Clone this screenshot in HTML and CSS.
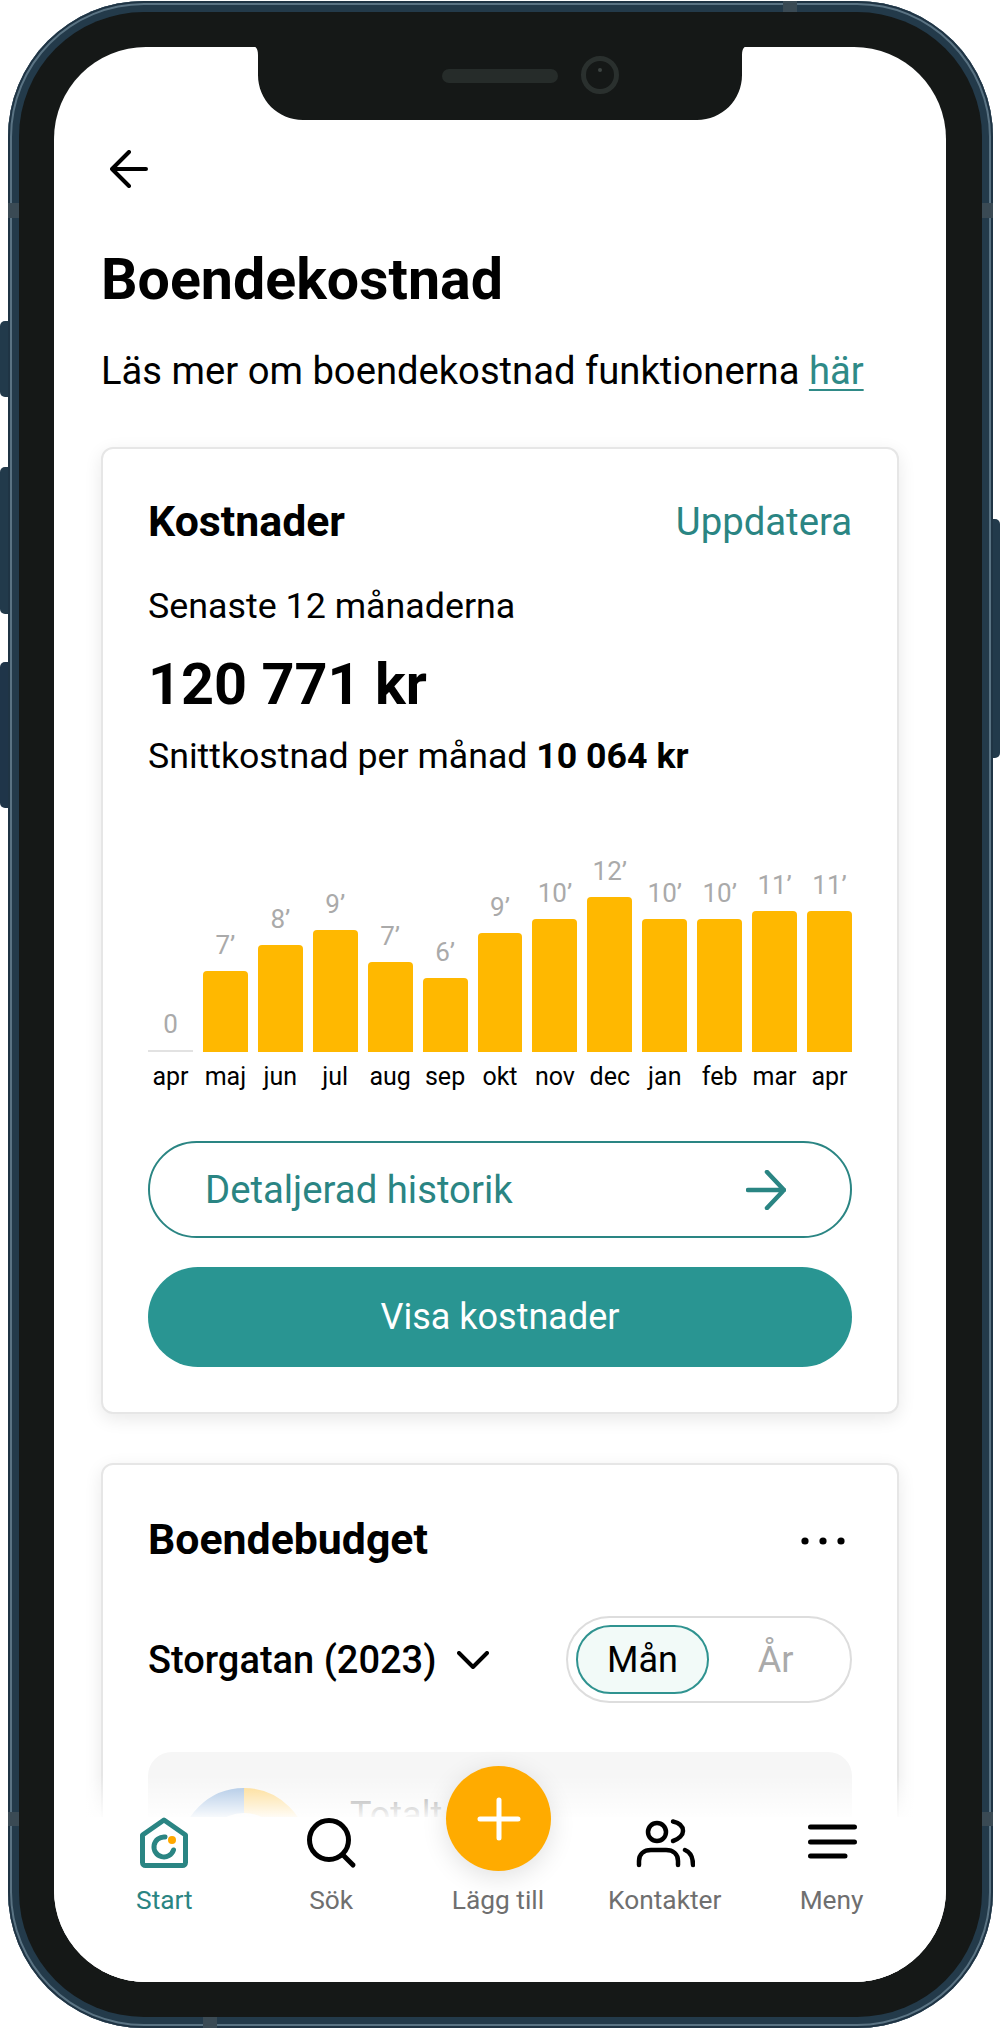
FILE: index.html
```html
<!DOCTYPE html>
<html lang="sv">
<head>
<meta charset="utf-8">
<title>Boendekostnad</title>
<link rel="stylesheet" href="styles.css">
</head>
<body>
<div class="device">
  <span class="side-btn btn-a"></span>
  <span class="side-btn btn-b"></span>
  <span class="side-btn btn-c"></span>
  <span class="side-btn btn-r"></span>
  <div class="frame">
    <span class="band band-lt"></span>
    <span class="band band-rt"></span>
    <span class="band band-lb"></span>
    <span class="band band-rb"></span>
    <span class="band band-t"></span>
    <span class="band band-b"></span>
    <div class="bezel">
      <div class="screen">
        <main class="content">
          <svg class="back" viewBox="0 0 38 38" fill="none" stroke="#000" stroke-width="4" stroke-linecap="round" stroke-linejoin="round"><path d="M36 19H2M19 2L2 19l17 17"/></svg>
          <h1 class="title">Boendekostnad</h1>
          <p class="intro">Läs mer om boendekostnad funktionerna <a class="link" href="#">här</a></p>

          <section class="card card-costs">
            <div class="card-head">
              <h2 class="card-title">Kostnader</h2>
              <span class="update">Uppdatera</span>
            </div>
            <p class="period">Senaste 12 månaderna</p>
            <p class="total">120 771 kr</p>
            <p class="average">Snittkostnad per månad <b>10 064 kr</b></p>

            <div class="chart">
              <div class="col"><span class="val">0</span><span class="bar bar-zero"></span></div>
              <div class="col"><span class="val">7’</span><span class="bar" style="height:81px"></span></div>
              <div class="col"><span class="val">8’</span><span class="bar" style="height:107px"></span></div>
              <div class="col"><span class="val">9’</span><span class="bar" style="height:122px"></span></div>
              <div class="col"><span class="val">7’</span><span class="bar" style="height:90px"></span></div>
              <div class="col"><span class="val">6’</span><span class="bar" style="height:74px"></span></div>
              <div class="col"><span class="val">9’</span><span class="bar" style="height:119px"></span></div>
              <div class="col"><span class="val">10’</span><span class="bar" style="height:133px"></span></div>
              <div class="col"><span class="val">12’</span><span class="bar" style="height:155px"></span></div>
              <div class="col"><span class="val">10’</span><span class="bar" style="height:133px"></span></div>
              <div class="col"><span class="val">10’</span><span class="bar" style="height:133px"></span></div>
              <div class="col"><span class="val">11’</span><span class="bar" style="height:141px"></span></div>
              <div class="col"><span class="val">11’</span><span class="bar" style="height:141px"></span></div>
            </div>
            <div class="months">
              <span>apr</span><span>maj</span><span>jun</span><span>jul</span><span>aug</span><span>sep</span><span>okt</span><span>nov</span><span>dec</span><span>jan</span><span>feb</span><span>mar</span><span>apr</span>
            </div>

            <a class="btn-outline" href="#">
              <span>Detaljerad historik</span>
              <svg class="btn-arrow" viewBox="0 0 40 40" fill="none" stroke="#2a8583" stroke-width="4.5" stroke-linecap="round" stroke-linejoin="round"><path d="M2 20h36M21 2l17 18-17 18"/></svg>
            </a>
            <a class="btn-solid" href="#">Visa kostnader</a>
          </section>

          <section class="card card-budget">
            <div class="card-head">
              <h2 class="card-title">Boendebudget</h2>
              <svg class="dots" viewBox="0 0 44 8" fill="#000"><circle cx="4" cy="4" r="3.6"/><circle cx="22" cy="4" r="3.6"/><circle cx="40" cy="4" r="3.6"/></svg>
            </div>
            <div class="budget-row">
              <div class="picker">
                <span>Storgatan (2023)</span>
                <svg class="chevron" viewBox="0 0 32 18" fill="none" stroke="#000" stroke-width="4" stroke-linecap="round" stroke-linejoin="round"><path d="M2 2l14 14L30 2"/></svg>
              </div>
              <div class="toggle">
                <span class="toggle-on">Mån</span>
                <span class="toggle-off">År</span>
              </div>
            </div>
            <div class="summary">
              <svg class="donut" viewBox="0 0 128 128" fill="none" stroke-width="25"><path d="M64 12.5A51.5 51.5 0 0 0 12.5 64" stroke="#9dbce0"/><path d="M64 12.5A51.5 51.5 0 0 1 115.5 64" stroke="#fdd680"/></svg>
              <span class="summary-label">Totalt</span>
            </div>
          </section>
        </main>

        <nav class="nav">
          <a class="nav-item nav-active" href="#">
            <svg class="nav-icon" viewBox="0 0 60 60" fill="none" stroke="#2a8583" stroke-width="5" stroke-linecap="round" stroke-linejoin="round"><path d="M30 3L8.5 18v27.5a3 3 0 0 0 3 3h37a3 3 0 0 0 3-3V18z"/><path d="M31 20A10 10 0 1 0 39.5 33"/><circle cx="38" cy="23" r="4" fill="#ffa800" stroke="none"/></svg>
            <span>Start</span>
          </a>
          <a class="nav-item" href="#">
            <svg class="nav-icon" viewBox="0 0 60 60" fill="none" stroke="#000" stroke-width="5" stroke-linecap="round"><circle cx="28" cy="23" r="19.5"/><path d="M42 38l10 10"/></svg>
            <span>Sök</span>
          </a>
          <a class="nav-item" href="#">
            <span class="nav-icon"></span>
            <span>Lägg till</span>
          </a>
          <a class="nav-item" href="#">
            <svg class="nav-icon" viewBox="0 0 60 60" fill="none" stroke="#000" stroke-width="4.5" stroke-linecap="round"><circle cx="22" cy="15" r="9"/><path d="M38 4.5C45 6 48 10 48 14c0 4-4 8-10 10"/><path d="M4 48v-4c0-7 5-11 12-11h15c7 0 12 4 12 11v4"/><path d="M50 33c5 2 8 6 8 15"/></svg>
            <span>Kontakter</span>
          </a>
          <a class="nav-item" href="#">
            <svg class="nav-icon" viewBox="0 0 60 60" fill="none" stroke="#000" stroke-width="5" stroke-linecap="round"><path d="M8.5 10h44M8.5 25h44M8.5 39H43"/></svg>
            <span>Meny</span>
          </a>
          <button class="fab" type="button" aria-label="Lägg till">
            <svg viewBox="0 0 44 44" fill="none" stroke="#fff" stroke-width="5" stroke-linecap="round"><path d="M22 3v38M3 22h38"/></svg>
          </button>
        </nav>

        <svg class="notch" viewBox="0 0 496 74">
          <path fill="#151817" d="M0 0C4 0 6 3 6 9V29C6 54 26 74 51 74H445C470 74 490 54 490 29V9C490 3 492 0 496 0Z"/>
          <rect x="190" y="23" width="116" height="14" rx="7" fill="#262c2a"/>
          <circle cx="348" cy="29" r="16.5" fill="none" stroke="#2a302e" stroke-width="5"/>
          <circle cx="348" cy="24" r="2" fill="#3d4442"/>
        </svg>
      </div>
    </div>
  </div>
</div>
</body>
</html>
```

FILE: styles.css
```css
* { box-sizing: border-box; }

html, body { margin: 0; padding: 0; background: #fff; }

body {
  width: 1000px;
  height: 2029px;
  overflow: hidden;
  font-family: Roboto, "Liberation Sans", sans-serif;
  color: #000;
}

.device {
  position: relative;
  width: 1000px;
  height: 2029px;
  padding: 1px 7px 1px 8px;
}

.side-btn {
  position: absolute;
  width: 9px;
  background: #223a4b;
}
.btn-a { left: 0; top: 321px; height: 76px; border-radius: 5px 0 0 5px; }
.btn-b { left: 0; top: 467px; height: 147px; border-radius: 5px 0 0 5px; }
.btn-c { left: 0; top: 662px; height: 146px; border-radius: 5px 0 0 5px; background: #1f3549; }
.btn-r { right: 0; top: 519px; height: 239px; border-radius: 0 5px 5px 0; }

.frame {
  position: relative;
  height: 100%;
  padding: 11px;
  border-radius: 136px;
  background: #233a4a;
  box-shadow: inset 0 0 0 2px #1f3444, inset 0 0 0 4px #5a7383;
}

.band { position: absolute; background: #3a4a54; }
.band-lt { left: 0; top: 202px; width: 11px; height: 15px; }
.band-rt { right: 0; top: 202px; width: 11px; height: 15px; }
.band-lb { left: 0; top: 1811px; width: 11px; height: 14px; }
.band-rb { right: 0; top: 1811px; width: 11px; height: 14px; }
.band-t { left: 775px; top: 0; width: 14px; height: 11px; }
.band-b { left: 195px; bottom: 0; width: 14px; height: 11px; }

.bezel {
  height: 100%;
  padding: 35px 36px 35px 35px;
  border-radius: 125px;
  background: #151817;
}

.screen {
  position: relative;
  height: 100%;
  overflow: hidden;
  border-radius: 92px;
  background: #fff;
}

.notch {
  position: absolute;
  left: 198px;
  top: -1px;
  width: 496px;
  height: 74px;
}

.content { padding: 103px 47px 0; }

.back { display: block; width: 38px; height: 38px; margin-left: 9px; }

.title {
  margin: 56px 0 0;
  font-size: 57.3px;
  line-height: 72px;
  font-weight: 700;
}

.intro {
  margin: 30px 0 0;
  font-size: 38.2px;
  line-height: 50px;
  white-space: nowrap;
}

.link { color: #2f8a87; text-underline-offset: 5px; text-decoration-thickness: 2px; }

.card {
  border: 2px solid #e6e6e6;
  border-radius: 12px;
  background: #fff;
  box-shadow: 0 5px 18px rgba(0, 0, 0, .09);
}

.card-costs { margin-top: 51px; padding: 46px 45px 45px; }
.card-budget { margin-top: 49px; padding: 48px 45px 60px; }

.card-head {
  display: flex;
  align-items: center;
  justify-content: space-between;
  height: 52px;
}

.card-title { margin: 0; font-size: 42.8px; line-height: 52px; font-weight: 700; }

.update { font-size: 38.3px; color: #2a8583; }

.period { margin: 37px 0 0; font-size: 35.8px; line-height: 44px; }

.total { margin: 22px 0 0; font-size: 57.6px; line-height: 70px; font-weight: 700; }

.average { margin: 14px 0 0; font-size: 35.7px; line-height: 44px; }
.average b { font-weight: 700; }

.chart,
.months {
  display: grid;
  grid-template-columns: repeat(13, 1fr);
  column-gap: 10px;
}

.chart { height: 192px; margin-top: 79px; }

.col {
  display: flex;
  flex-direction: column;
  justify-content: flex-end;
  align-items: stretch;
}

.val {
  height: 28px;
  margin-bottom: 12px;
  font-size: 26px;
  line-height: 28px;
  text-align: center;
  color: #aaa;
}

.bar { display: block; border-radius: 4px 4px 0 0; background: #ffb800; }
.bar-zero { height: 2px; border-radius: 0; background: #e2e2e2; }

.months {
  height: 30px;
  margin-top: 13px;
  font-size: 25px;
  line-height: 30px;
  text-align: center;
}
.months span { white-space: nowrap; justify-self: center; }

.btn-outline {
  display: flex;
  align-items: center;
  justify-content: space-between;
  height: 97px;
  margin-top: 49px;
  padding: 0 64px 0 55px;
  border: 2px solid #2a8583;
  border-radius: 49px;
  font-size: 38.3px;
  color: #2a8583;
  text-decoration: none;
}

.btn-arrow { width: 40px; height: 40px; }

.btn-solid {
  display: flex;
  align-items: center;
  justify-content: center;
  height: 100px;
  margin-top: 29px;
  border-radius: 50px;
  background: #299592;
  font-size: 36px;
  color: #fff;
  text-decoration: none;
}

.dots { width: 44px; height: 8px; margin: 3px 7px 0 0; }

.budget-row {
  display: flex;
  align-items: center;
  justify-content: space-between;
  margin-top: 51px;
}

.picker {
  display: flex;
  align-items: center;
  gap: 21px;
  font-size: 38px;
  font-weight: 500;
}

.chevron { width: 32px; height: 18px; }

.toggle {
  display: flex;
  align-items: center;
  width: 286px;
  height: 87px;
  padding: 0 8px;
  border: 2px solid #ddd;
  border-radius: 44px;
  font-size: 36px;
}

.toggle-on {
  display: flex;
  align-items: center;
  justify-content: center;
  width: 133px;
  height: 69px;
  border: 2px solid #2f9390;
  border-radius: 35px;
  background: #f2faf8;
}

.toggle-off { flex: 1; text-align: center; color: #aaa; }

.summary {
  display: flex;
  align-items: flex-start;
  gap: 42px;
  height: 240px;
  margin-top: 49px;
  padding: 36px 0 0 32px;
  border-radius: 24px;
  background: #f6f6f6;
}

.donut { width: 128px; height: 128px; flex: none; }

.summary-label { font-size: 36px; line-height: 44px; margin-top: 5px; color: #888; }

.nav {
  position: absolute;
  left: 0;
  right: 0;
  bottom: 0;
  display: flex;
  height: 165px;
  padding: 0 31px 0 27px;
  background: #fff;
}

.nav::before {
  content: "";
  position: absolute;
  left: 0;
  right: 0;
  bottom: 100%;
  height: 42px;
  background: linear-gradient(rgba(255, 255, 255, 0), rgba(255, 255, 255, .92));
}

.nav-item {
  display: flex;
  flex-direction: column;
  align-items: center;
  flex: 1 1 0;
  font-size: 26.3px;
  line-height: 32px;
  color: #6f6f6f;
  text-decoration: none;
}

.nav-active { color: #2a8583; }

.nav-icon { display: block; width: 60px; height: 60px; margin-bottom: 7px; }

.fab {
  position: absolute;
  left: 392px;
  top: -51px;
  display: flex;
  align-items: center;
  justify-content: center;
  width: 105px;
  height: 105px;
  padding: 0;
  border: 0;
  border-radius: 50%;
  background: #ffab00;
  box-shadow: 0 6px 26px rgba(0, 0, 0, .12);
}

.fab svg { width: 44px; height: 44px; }
```
